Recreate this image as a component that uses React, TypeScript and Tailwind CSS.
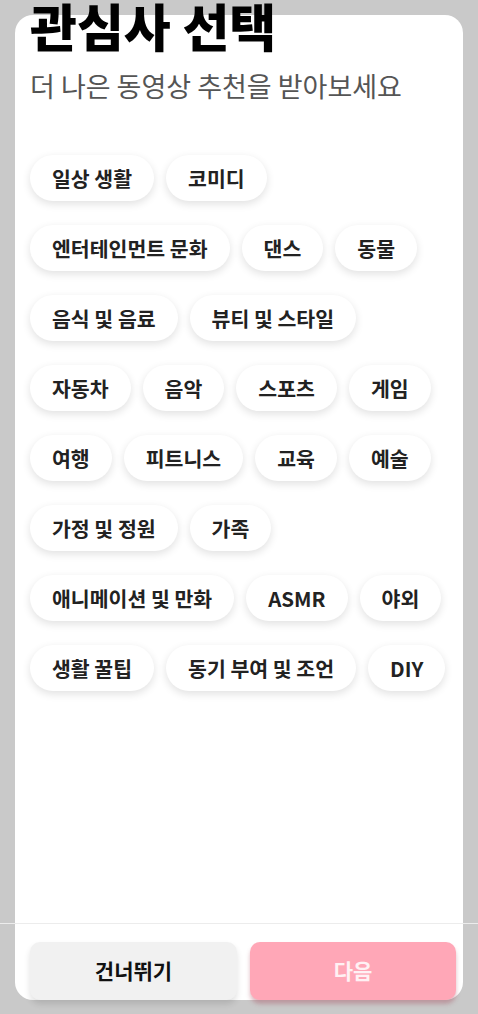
import { useState } from 'react';

const rows: string[][] = [
  ['일상 생활', '코미디'],
  ['엔터테인먼트 문화', '댄스', '동물'],
  ['음식 및 음료', '뷰티 및 스타일'],
  ['자동차', '음악', '스포츠', '게임'],
  ['여행', '피트니스', '교육', '예술'],
  ['가정 및 정원', '가족'],
  ['애니메이션 및 만화', 'ASMR', '야외'],
  ['생활 꿀팁', '동기 부여 및 조언', 'DIY'],
];

const font = { fontFamily: '"Noto Sans CJK KR", "Noto Sans", sans-serif' };

export default function App() {
  const [selected, setSelected] = useState<string[]>([]);

  const toggle = (name: string) =>
    setSelected((prev) => (prev.includes(name) ? prev.filter((n) => n !== name) : [...prev, name]));

  return (
    <div className="h-[1014px] w-[478px] overflow-hidden bg-[#c9c9c9] pt-[15px]" style={font}>
      {/* Card */}
      <div className="relative mx-[15px] flex h-[985px] flex-col rounded-[18px] bg-white">
        {/* Header */}
        <div className="px-[15px]">
          <h1 className="-mt-[18px] whitespace-nowrap text-[51px] font-black leading-[56px] text-black">관심사 선택</h1>
          <p className="mt-[17px] whitespace-nowrap text-[27px] leading-[32px] text-[#555]">더 나은 동영상 추천을 받아보세요</p>
        </div>

        {/* Interest chips */}
        <div className="mt-[53px] flex flex-col gap-[24px] pl-[15px]">
          {rows.map((row, i) => (
            <div key={i} className="flex gap-[12px]">
              {row.map((name) => {
                const active = selected.includes(name);
                return (
                  <button
                    key={name}
                    onClick={() => toggle(name)}
                    className={
                      active
                        ? 'h-[46px] shrink-0 whitespace-nowrap rounded-full bg-[#ff4d6d] px-[22px] text-[20.5px] font-semibold text-white shadow-[0_3px_9px_rgba(0,0,0,0.12)]'
                        : 'h-[46px] shrink-0 whitespace-nowrap rounded-full bg-white px-[22px] text-[20.5px] font-semibold text-[#222] shadow-[0_3px_9px_rgba(0,0,0,0.12)]'
                    }
                  >
                    {name}
                  </button>
                );
              })}
            </div>
          ))}
        </div>

        {/* Footer */}
        <div className="relative mt-auto flex gap-[13px] px-[15px] pt-[19px]">
          <div className="absolute -left-[15px] -right-[15px] top-0 h-px bg-[#ececec]" />
          <button className="h-[58px] w-[207px] shrink-0 rounded-[10px] bg-[#f1f1f1] text-[21px] font-semibold text-[#111] shadow-[0_4px_6px_rgba(0,0,0,0.12)]">
            건너뛰기
          </button>
          <button className="h-[58px] w-[206px] shrink-0 rounded-[10px] bg-[#ffa7b7] text-[21px] font-semibold text-[#fff1f4] shadow-[0_4px_4px_rgba(160,60,80,0.35)]">
            다음
          </button>
        </div>
      </div>
    </div>
  );
}
